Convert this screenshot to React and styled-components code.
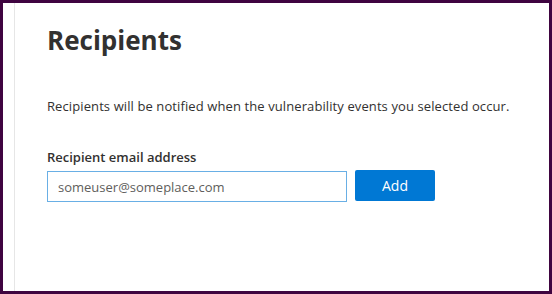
import styled, { createGlobalStyle } from 'styled-components'

const Global = createGlobalStyle`
  html, body {
    margin: 0;
    padding: 0;
    background: #ffffff;
  }
  * {
    box-sizing: border-box;
  }
`

const Frame = styled.div`
  width: 552px;
  height: 294px;
  border: 3px solid #3f0440;
  background: #ffffff;
  padding-left: 11px;
  display: flex;
  font-family: 'Open Sans', 'Liberation Sans', sans-serif;
  color: #323130;
`

const Panel = styled.section`
  flex: 1;
  border-left: 1px solid #e6e6e6;
  padding: 19px 32px 0 32px;
  display: flex;
  flex-direction: column;
`

const Title = styled.h1`
  margin: 0;
  font-size: 26px;
  font-weight: 700;
  line-height: 36px;
  color: #323130;
`

const Description = styled.p`
  margin: 38px 0 0 0;
  font-size: 13px;
  letter-spacing: 0.1px;
  line-height: 20px;
  color: #323130;
`

const Label = styled.label`
  margin-top: 31px;
  font-size: 13px;
  font-weight: 600;
  line-height: 20px;
  color: #323130;
`

const Row = styled.div`
  display: flex;
  align-items: flex-start;
  gap: 8px;
  margin-top: 4px;
`

const Input = styled.input`
  width: 300px;
  height: 31px;
  border: 1px solid #69afe5;
  border-radius: 0;
  padding: 0 10px;
  font-family: inherit;
  font-size: 13px;
  color: #605e5c;
  outline: none;
  &::placeholder {
    color: #605e5c;
  }
`

const Button = styled.button`
  width: 80px;
  height: 31px;
  margin-top: -1px;
  border: none;
  border-radius: 2px;
  background: #0078d4;
  color: #ffffff;
  font-family: inherit;
  font-size: 14px;
  font-weight: 400;
`

const App = () => {
  return (
    <Frame>
      <Global />
      <Panel>
        <Title>Recipients</Title>
        <Description>Recipients will be notified when the vulnerability events you selected occur.</Description>
        <Label htmlFor='recipient'>Recipient email address</Label>
        <Row>
          <Input id='recipient' placeholder='someuser@someplace.com' />
          <Button>Add</Button>
        </Row>
      </Panel>
    </Frame>
  )
}

export default App
